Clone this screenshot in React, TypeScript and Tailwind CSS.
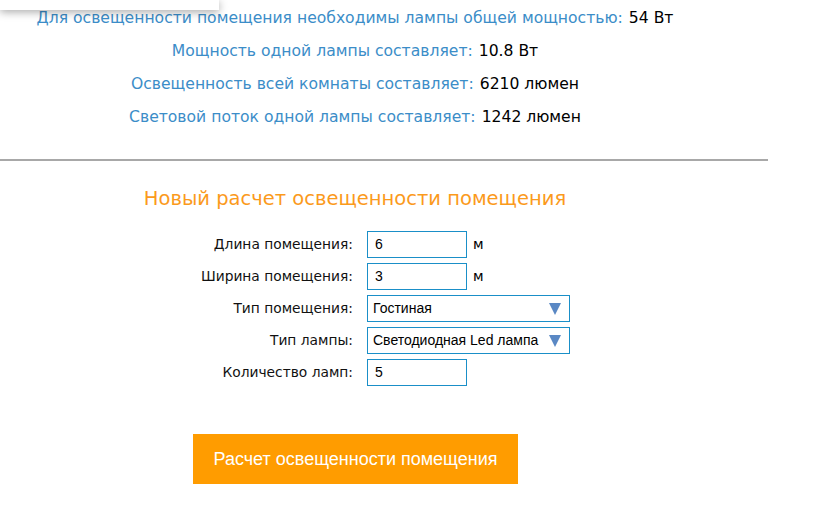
import React from 'react';

const results = [
  { label: 'Для освещенности помещения необходимы лампы общей мощностью:', value: '54 Вт' },
  { label: 'Мощность одной лампы составляет:', value: '10.8 Вт' },
  { label: 'Освещенность всей комнаты составляет:', value: '6210 люмен' },
  { label: 'Световой поток одной лампы составляет:', value: '1242 люмен' },
];

function Row({ label, children }: { label: string; children: React.ReactNode }) {
  return (
    <div className="flex items-center h-[32px]">
      <div className="w-[367px] text-right pr-[14px] text-[13.8px] text-[#111]">{label}</div>
      {children}
    </div>
  );
}

function TextBox({ value }: { value: string }) {
  return (
    <div className="w-[100px] h-[27px] border border-[#1a8fc8] px-[7px] flex items-center text-[14px] text-black font-['Liberation_Sans',Arial,sans-serif]">
      {value}
    </div>
  );
}

function SelectBox({ value }: { value: string }) {
  return (
    <div className="w-[203px] h-[27px] border border-[#1a8fc8] pl-[5px] pr-[8px] flex items-center justify-between text-[14px] text-black font-['Liberation_Sans',Arial,sans-serif]">
      <span>{value}</span>
      <svg width="12" height="13" viewBox="0 0 12 13">
        <polygon points="0,1 12,1 6,13" fill="#5a88c4" />
      </svg>
    </div>
  );
}

export default function App() {
  return (
    <div className="relative w-[827px] h-[510px] bg-white overflow-hidden font-['DejaVu_Sans',Verdana,sans-serif]">
      <div className="absolute left-0 top-0 w-[219px] h-[10px] bg-white shadow-[0_2px_8px_rgba(0,0,0,0.35)]" />

      <div className="w-[710px] pt-[2px] flex flex-col items-center">
        {results.map((r) => (
          <div key={r.label} className="h-[33px] flex items-center text-[15.6px] whitespace-nowrap">
            <span className="text-[#3b8dc8]">{r.label}</span>
            <span className="text-black ml-[6px]">{r.value}</span>
          </div>
        ))}
      </div>

      <div className="w-[768px] mt-[25px] border-t-2 border-[#a8a8a8]" />

      <div className="w-[710px] flex flex-col items-center">
        <h2 className="mt-[25px] text-[19.5px] text-[#fb9a1c] h-[26px] leading-[26px]">
          Новый расчет освещенности помещения
        </h2>
      </div>

      <div className="mt-[16px] flex flex-col">
        <Row label="Длина помещения:">
          <TextBox value="6" />
          <span className="ml-[6px] text-[14px] text-black">м</span>
        </Row>
        <Row label="Ширина помещения:">
          <TextBox value="3" />
          <span className="ml-[6px] text-[14px] text-black">м</span>
        </Row>
        <Row label="Тип помещения:">
          <SelectBox value="Гостиная" />
        </Row>
        <Row label="Тип лампы:">
          <SelectBox value="Светодиодная Led лампа" />
        </Row>
        <Row label="Количество ламп:">
          <TextBox value="5" />
        </Row>
      </div>

      <div className="mt-[46px] pl-[193px]">
        <button className="w-[325px] h-[50px] bg-[#ff9c00] text-white text-[18px] font-['Liberation_Sans',Arial,sans-serif]">
          Расчет освещенности помещения
        </button>
      </div>
    </div>
  );
}
